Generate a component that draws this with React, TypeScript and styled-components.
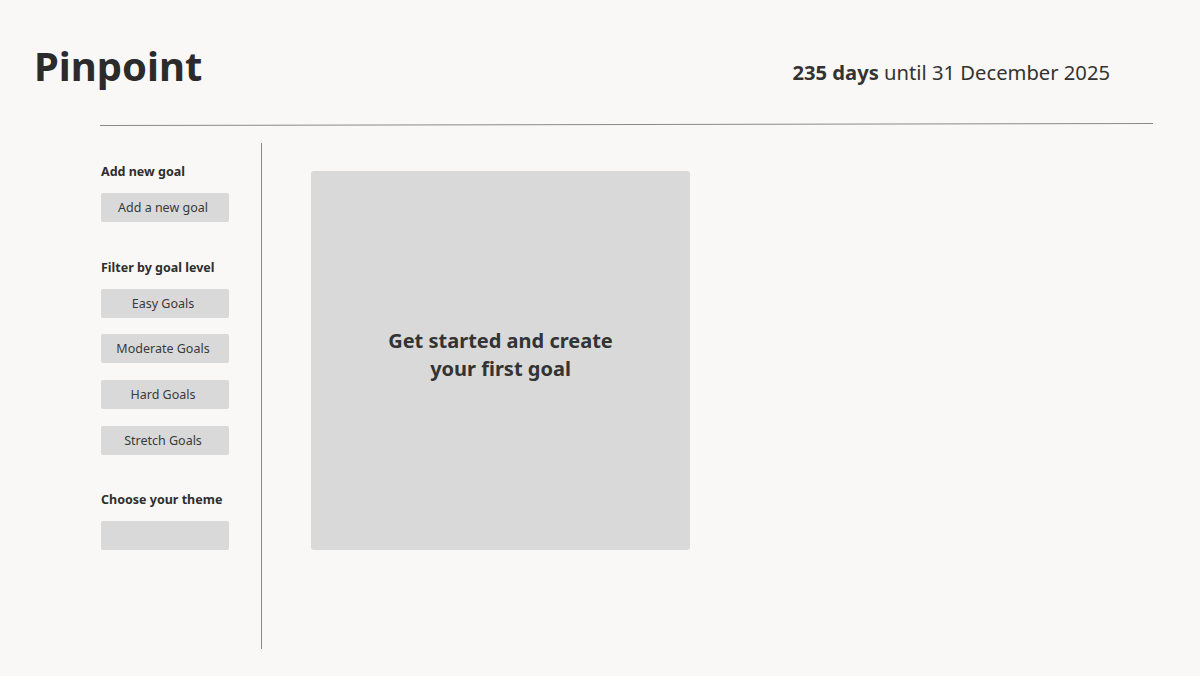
import React from "react";
import styled, { createGlobalStyle } from "styled-components";

const GlobalStyle = createGlobalStyle`
  html, body {
    margin: 0;
    padding: 0;
    background: #faf8f6;
    font-family: "Noto Sans", "Open Sans", sans-serif;
    color: #2e2e2e;
  }
`;

const Page = styled.div`
  width: 1200px;
  height: 676px;
  overflow: hidden;
`;

const Header = styled.header`
  display: flex;
  align-items: flex-end;
  justify-content: space-between;
  padding: 36px 90px 0 34px;
  height: 58px;
`;

const Title = styled.h1`
  margin: 0;
  font-size: 40px;
  font-weight: 700;
  line-height: 56px;
  color: #2b2b2b;
`;

const Countdown = styled.p`
  margin: 0 0 8px;
  font-size: 20.2px;
  line-height: 28px;
  color: #333;

  strong {
    font-weight: 700;
  }
`;

const Divider = styled.hr`
  margin: 30px 0 0 100px;
  width: 1053px;
  border: none;
  border-top: 1px solid #8a8a8a;
  transform: rotate(-0.1deg);
`;

const Body = styled.div`
  display: flex;
  padding: 18px 0 0 101px;
`;

const Sidebar = styled.aside`
  width: 160px;
  height: 486px;
  padding-top: 20px;
  border-right: 1px solid #8a8a8a;
  display: flex;
  flex-direction: column;
`;

const Heading = styled.h2<{ $gap?: number }>`
  margin: ${(p) => p.$gap ?? 0}px 0 12px;
  font-size: 12.5px;
  font-weight: 700;
  line-height: 18px;
  color: #2e2e2e;
`;

const SideButton = styled.button<{ $space?: number }>`
  width: 128px;
  height: 29px;
  margin-bottom: ${(p) => p.$space ?? 17}px;
  border: none;
  border-radius: 2px;
  background: #d9d9d9;
  font-family: inherit;
  font-size: 12.5px;
  color: #3a3a3a;
  padding: 0 4px 0 0;
  cursor: pointer;
`;

const Main = styled.main`
  padding: 28px 0 0 49px;
`;

const EmptyCard = styled.div`
  width: 379px;
  height: 379px;
  border-radius: 3px;
  background: #d9d9d9;
  display: flex;
  align-items: center;
  justify-content: center;
  padding-bottom: 12px;
  box-sizing: border-box;
`;

const EmptyText = styled.p`
  margin: 0;
  font-size: 20px;
  font-weight: 700;
  line-height: 28px;
  text-align: center;
  color: #333;
`;

const filters = ["Easy Goals", "Moderate Goals", "Hard Goals", "Stretch Goals"];

const App: React.FC = () => {
  return (
    <Page>
      <GlobalStyle />
      <Header>
        <Title>Pinpoint</Title>
        <Countdown>
          <strong>235 days</strong> until 31 December 2025
        </Countdown>
      </Header>
      <Divider />
      <Body>
        <Sidebar>
          <Heading>Add new goal</Heading>
          <SideButton>Add a new goal</SideButton>
          <Heading $gap={20}>Filter by goal level</Heading>
          {filters.map((f, i) => (
            <SideButton key={f} $space={i === 0 ? 16 : 17}>
              {f}
            </SideButton>
          ))}
          <Heading $gap={19}>Choose your theme</Heading>
          <SideButton aria-label="Theme" />
        </Sidebar>
        <Main>
          <EmptyCard>
            <EmptyText>
              Get started and create
              <br />
              your first goal
            </EmptyText>
          </EmptyCard>
        </Main>
      </Body>
    </Page>
  );
};

export default App;
